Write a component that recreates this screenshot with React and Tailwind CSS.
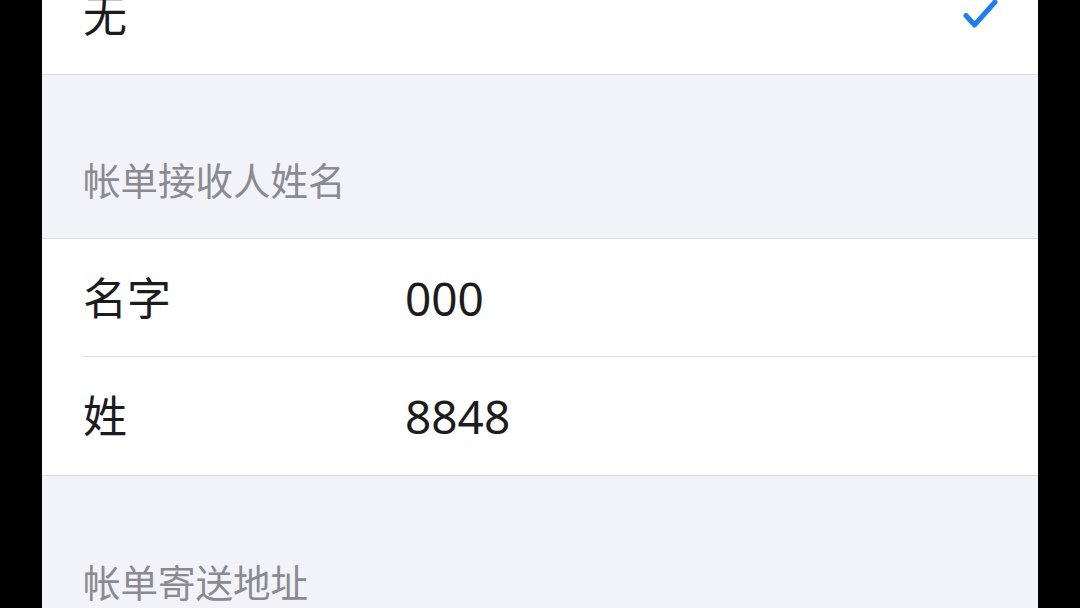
import React from 'react';

const font = { fontFamily: '"Noto Sans", "Noto Sans CJK SC", sans-serif' };

const Check = () => (
  <svg width="38" height="32" viewBox="0 0 38 32" fill="none">
    <path
      d="M4 16.5 L12.5 26 L33 3"
      stroke="#1a7ff2"
      strokeWidth="5"
      strokeLinecap="round"
      strokeLinejoin="round"
    />
  </svg>
);

const SectionHeader = ({ title, height }) => (
  <div className={`${height} flex items-end pl-[41px] pb-[37px]`}>
    <span className="text-[37.5px] leading-[40px] text-[#8a8a8f]">{title}</span>
  </div>
);

const FieldRow = ({ label, value, divider }) => (
  <div className="relative h-[118px] flex items-center pl-[41px]">
    <span className="w-[322px] text-[44px] text-[#1c1c1e]">{label}</span>
    <span className="text-[46px] text-[#1c1c1e]">{value}</span>
    {divider && (
      <div className="absolute bottom-0 left-[40px] right-0 h-[1.5px] bg-[#e0e0e4]" />
    )}
  </div>
);

export default function App() {
  return (
    <div className="w-[1080px] h-[608px] bg-black flex justify-center overflow-hidden" style={font}>
      <div className="w-[996px] h-[608px] bg-[#f2f3f9] overflow-hidden">
        {/* selected option row, scrolled partly off the top */}
        <div className="-mt-[45px] h-[120px] bg-white border-b border-[#dcdce0] flex items-center justify-between pl-[41px] pr-[38px]">
          <span className="text-[44px] text-[#1c1c1e]">无</span>
          <Check />
        </div>

        <SectionHeader title="帐单接收人姓名" height="h-[163px]" />

        <div className="bg-white border-y border-[#dcdce0]">
          <FieldRow label="名字" value="000" divider />
          <FieldRow label="姓" value="8848" />
        </div>

        <SectionHeader title="帐单寄送地址" height="h-[164px]" />
      </div>
    </div>
  );
}
